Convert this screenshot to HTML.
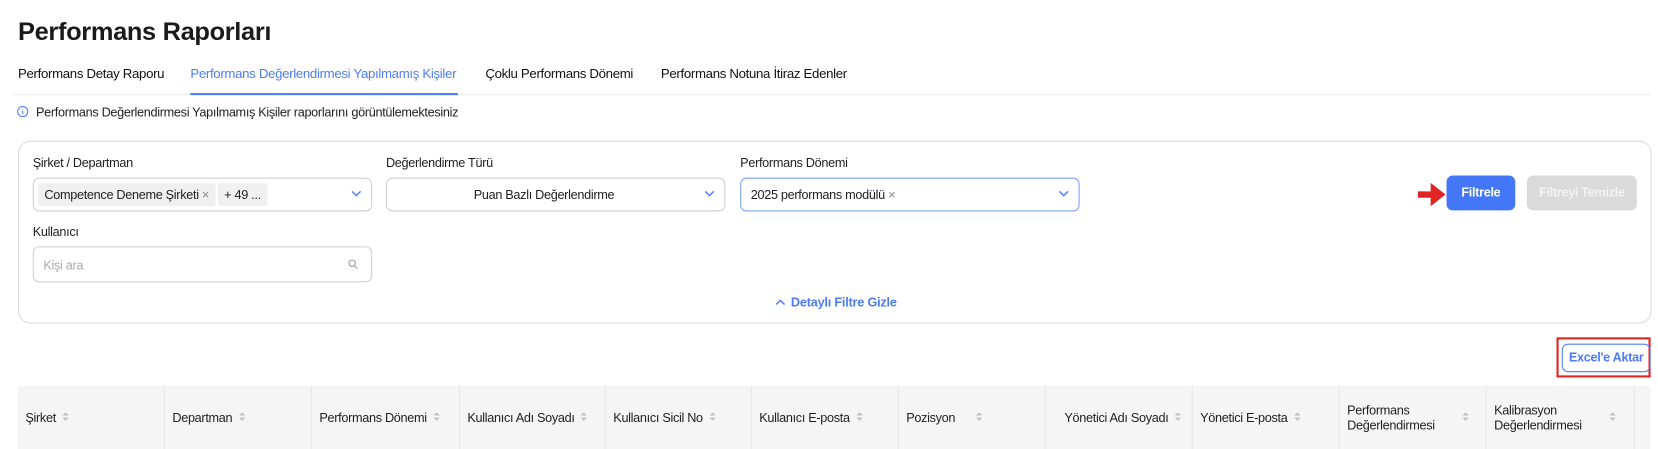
<!DOCTYPE html>
<html><head><meta charset="utf-8"><style>
*{box-sizing:border-box;margin:0;padding:0}
html,body{width:1658px;height:425px;overflow:hidden;background:#fff}
body{font-family:"Liberation Sans",sans-serif;color:#1f1f1f;font-size:12px;letter-spacing:-0.3px}
#w{position:absolute;left:0;top:0;width:1568px;height:402px;transform:scale(1.0574);transform-origin:0 0}
.a{position:absolute;white-space:nowrap}
h1{position:absolute;left:17px;top:17px;font-size:24px;font-weight:bold;letter-spacing:-0.3px;color:#1a1a1a}
.tab{position:absolute;top:63px;font-size:12.5px;color:#111}
.box{position:absolute;border:1px solid #cfcfcf;border-radius:6px;background:#fff;height:32px}
.chip{position:absolute;top:4px;height:22px;background:#f0f0f0;border-radius:3px;font-size:12px;line-height:22px;padding:0 6px;white-space:nowrap}
.chev{position:absolute;right:8px;top:10px;width:12px;height:8px}
.lbl{position:absolute;font-size:12px}
.sort{display:inline-block;width:6px;height:10px;margin-left:6px;vertical-align:middle;position:relative}
.sort:before{content:"";position:absolute;left:0;top:0;border:3px solid transparent;border-bottom:3.5px solid #c0c0c0;border-top:0}
.sort:after{content:"";position:absolute;left:0;top:5px;border:3px solid transparent;border-top:3.5px solid #c0c0c0;border-bottom:0}
.col{position:absolute;top:365px;height:60px;border-left:1px solid #e6e6e6;font-size:12px;padding-left:7px;display:flex;align-items:center;white-space:nowrap}
</style></head><body><div id="w">
<h1>Performans Raporları</h1>
<div class="tab a" style="left:17px">Performans Detay Raporu</div>
<div class="tab a" style="left:180px;color:#4d7cf6">Performans Değerlendirmesi Yapılmamış Kişiler</div>
<div class="tab a" style="left:459px">Çoklu Performans Dönemi</div>
<div class="tab a" style="left:625px">Performans Notuna İtiraz Edenler</div>
<div class="a" style="left:11px;top:89px;width:1550px;height:1px;background:#ececec"></div>
<div class="a" style="left:180px;top:88px;width:253px;height:2px;background:#4d7cf6"></div>
<svg class="a" style="left:16px;top:100px" width="11" height="11" viewBox="0 0 11 11"><circle cx="5.5" cy="5.5" r="4.8" fill="none" stroke="#4d7cf6"/><path d="M5.5 4.7v3.3M5.5 2.8v.8" stroke="#4d7cf6"/></svg>
<div class="a" style="left:34px;top:99px;font-size:12px">Performans Değerlendirmesi Yapılmamış Kişiler raporlarını görüntülemektesiniz</div>
<div class="a" style="left:17px;top:133px;width:1545px;height:173px;border:1px solid #dcdcdc;border-radius:12px"></div>
<div class="lbl a" style="left:31px;top:147px">Şirket / Departman</div>
<div class="lbl a" style="left:365px;top:147px">Değerlendirme Türü</div>
<div class="lbl a" style="left:700px;top:147px">Performans Dönemi</div>
<div class="box" style="left:31px;top:168px;width:321px"><div class="chip" style="left:4px">Competence Deneme Şirketi <span style="color:#888">×</span></div><div class="chip" style="left:174px;padding:0 6px">+ 49 ...</div><svg class="chev" viewBox="0 0 12 8"><path d="M2 2l4 4 4-4" fill="none" stroke="#4d7cf6" stroke-width="1.4"/></svg></div>
<div class="box" style="left:365px;top:168px;width:321px"><div class="a" style="left:82px;top:8px;font-size:12px">Puan Bazlı Değerlendirme</div><svg class="chev" viewBox="0 0 12 8"><path d="M2 2l4 4 4-4" fill="none" stroke="#4d7cf6" stroke-width="1.4"/></svg></div>
<div class="box" style="left:700px;top:168px;width:321px;border-color:#7d9ff8"><div class="a" style="left:9px;top:8px;font-size:12px">2025 performans modülü <span style="color:#888">×</span></div><svg class="chev" viewBox="0 0 12 8"><path d="M2 2l4 4 4-4" fill="none" stroke="#4d7cf6" stroke-width="1.4"/></svg></div>
<div class="lbl a" style="left:31px;top:212px">Kullanıcı</div>
<div class="box" style="left:31px;top:233px;width:321px;height:34px"><div class="a" style="left:9px;top:10px;color:#aaa">Kişi ara</div><svg class="a" style="right:12px;top:11px" width="10" height="10" viewBox="0 0 10 10"><circle cx="4" cy="4" r="3" fill="none" stroke="#999"/><path d="M6.3 6.3L9 9" stroke="#999"/></svg></div>
<div class="a" style="left:733px;top:279px;color:#4d7cf6;font-size:12px;font-weight:bold;letter-spacing:-0.2px"><svg width="10" height="8" viewBox="0 0 10 8" style="margin-right:5px"><path d="M1 6l4-4 4 4" fill="none" stroke="#4d7cf6" stroke-width="1.4"/></svg>Detaylı Filtre Gizle</div>
<svg class="a" style="left:1341px;top:172px" width="26" height="24" viewBox="0 0 26 24"><path d="M0 9h12V1l14 11-14 11v-8H0z" fill="#e02424"/></svg>
<div class="a" style="left:1368px;top:166px;width:65px;height:33px;background:#4377f7;border-radius:6px;color:#fff;font-weight:bold;text-align:center;line-height:33px">Filtrele</div>
<div class="a" style="left:1444px;top:166px;width:104px;height:33px;background:#dadada;border-radius:6px;color:#f3f3f3;font-weight:bold;text-align:center;line-height:33px">Filtreyi Temizle</div>
<div class="a" style="left:1472px;top:319px;width:89px;height:38px;border:2px solid #e02424"></div>
<div class="a" style="left:1477px;top:325px;width:84px;height:27px;border:1px solid #4d7cf6;border-radius:6px;color:#4d7cf6;font-weight:bold;text-align:center;line-height:25px;font-size:12px">Excel'e Aktar</div>
<div class="a" style="left:17px;top:365px;width:1544px;height:60px;background:#f5f5f5"></div>
<div class="col" style="left:17px;border-left:0">Şirket<span class="sort"></span></div>
<div class="col" style="left:155px">Departman<span class="sort"></span></div>
<div class="col" style="left:294px">Performans Dönemi<span class="sort"></span></div>
<div class="col" style="left:434px">Kullanıcı Adı Soyadı<span class="sort"></span></div>
<div class="col" style="left:572px">Kullanıcı Sicil No<span class="sort"></span></div>
<div class="col" style="left:710px">Kullanıcı E-posta<span class="sort"></span></div>
<div class="col" style="left:849px">Pozisyon<span class="sort" style="margin-left:20px"></span></div>
<div class="col" style="left:988px;width:139px;justify-content:flex-end;padding-right:10px">Yönetici Adı Soyadı<span class="sort"></span></div>
<div class="col" style="left:1127px">Yönetici E-posta<span class="sort"></span></div>
<div class="col" style="left:1266px;width:139px;line-height:14px"><span>Performans<br>Değerlendirmesi</span><span class="sort" style="margin-left:26px"></span></div>
<div class="col" style="left:1405px;width:140px;line-height:14px"><span>Kalibrasyon<br>Değerlendirmesi</span><span class="sort" style="margin-left:26px"></span></div>
<div class="col" style="left:1545px;width:16px"></div>
</div></body></html>
